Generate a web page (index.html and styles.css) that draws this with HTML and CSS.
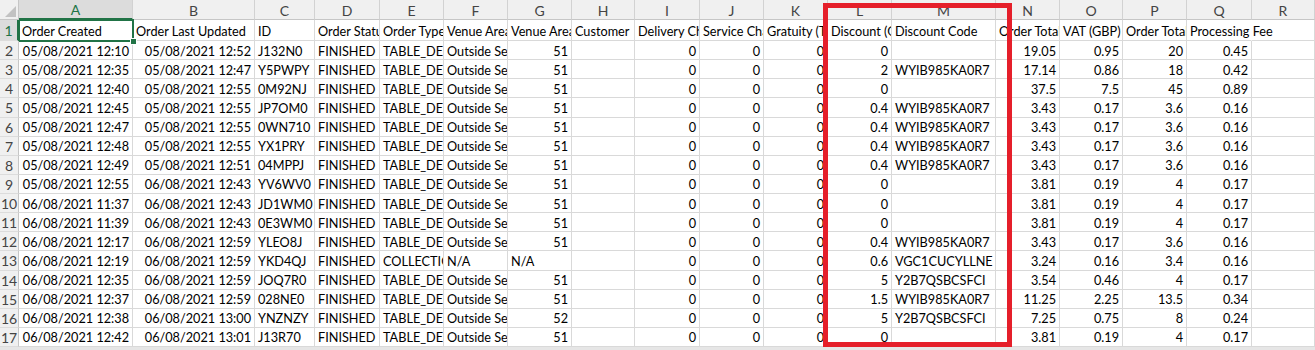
FILE: index.html
```html
<!DOCTYPE html>
<html>
<head>
<meta charset="utf-8">
<title>Orders</title>
<link rel="stylesheet" href="styles.css">
</head>
<body>
<div class="sheet">
  <div class="row hdr">
    <div class="corner"><span class="tri"></span></div>
    <div class="ch sel">A</div><div class="ch">B</div><div class="ch">C</div><div class="ch">D</div><div class="ch">E</div><div class="ch">F</div><div class="ch">G</div><div class="ch">H</div><div class="ch">I</div><div class="ch">J</div><div class="ch">K</div><div class="ch">L</div><div class="ch">M</div><div class="ch">N</div><div class="ch">O</div><div class="ch">P</div><div class="ch">Q</div><div class="ch">R</div>
  </div>
  <div class="row first">
    <div class="rh sel">1</div>
    <div class="c active">Order Created</div><div class="c">Order Last Updated</div><div class="c">ID</div><div class="c">Order Status</div><div class="c">Order Type</div><div class="c">Venue Area</div><div class="c">Venue Area ID</div><div class="c">Customer</div><div class="c">Delivery Charge (GBP)</div><div class="c">Service Charge (GBP)</div><div class="c">Gratuity (Tip)</div><div class="c">Discount (GBP)</div><div class="c">Discount Code</div><div class="c">Order Total (GBP)</div><div class="c">VAT (GBP)</div><div class="c">Order Total</div><div class="c spill">Processing Fee</div><div class="c"></div>
  </div>
  <div class="row"><div class="rh">2</div><div class="c n">05/08/2021 12:10</div><div class="c n">05/08/2021 12:52</div><div class="c">J132N0</div><div class="c">FINISHED</div><div class="c">TABLE_DELIVERY</div><div class="c">Outside Seating</div><div class="c n">51</div><div class="c"></div><div class="c n">0</div><div class="c n">0</div><div class="c n">0</div><div class="c n">0</div><div class="c"></div><div class="c n">19.05</div><div class="c n">0.95</div><div class="c n">20</div><div class="c n">0.45</div><div class="c"></div></div>
  <div class="row"><div class="rh">3</div><div class="c n">05/08/2021 12:35</div><div class="c n">05/08/2021 12:47</div><div class="c">Y5PWPY</div><div class="c">FINISHED</div><div class="c">TABLE_DELIVERY</div><div class="c">Outside Seating</div><div class="c n">51</div><div class="c"></div><div class="c n">0</div><div class="c n">0</div><div class="c n">0</div><div class="c n">2</div><div class="c">WYIB985KA0R7</div><div class="c n">17.14</div><div class="c n">0.86</div><div class="c n">18</div><div class="c n">0.42</div><div class="c"></div></div>
  <div class="row"><div class="rh">4</div><div class="c n">05/08/2021 12:40</div><div class="c n">05/08/2021 12:55</div><div class="c">0M92NJ</div><div class="c">FINISHED</div><div class="c">TABLE_DELIVERY</div><div class="c">Outside Seating</div><div class="c n">51</div><div class="c"></div><div class="c n">0</div><div class="c n">0</div><div class="c n">0</div><div class="c n">0</div><div class="c"></div><div class="c n">37.5</div><div class="c n">7.5</div><div class="c n">45</div><div class="c n">0.89</div><div class="c"></div></div>
  <div class="row"><div class="rh">5</div><div class="c n">05/08/2021 12:45</div><div class="c n">05/08/2021 12:55</div><div class="c">JP7OM0</div><div class="c">FINISHED</div><div class="c">TABLE_DELIVERY</div><div class="c">Outside Seating</div><div class="c n">51</div><div class="c"></div><div class="c n">0</div><div class="c n">0</div><div class="c n">0</div><div class="c n">0.4</div><div class="c">WYIB985KA0R7</div><div class="c n">3.43</div><div class="c n">0.17</div><div class="c n">3.6</div><div class="c n">0.16</div><div class="c"></div></div>
  <div class="row"><div class="rh">6</div><div class="c n">05/08/2021 12:47</div><div class="c n">05/08/2021 12:55</div><div class="c">0WN710</div><div class="c">FINISHED</div><div class="c">TABLE_DELIVERY</div><div class="c">Outside Seating</div><div class="c n">51</div><div class="c"></div><div class="c n">0</div><div class="c n">0</div><div class="c n">0</div><div class="c n">0.4</div><div class="c">WYIB985KA0R7</div><div class="c n">3.43</div><div class="c n">0.17</div><div class="c n">3.6</div><div class="c n">0.16</div><div class="c"></div></div>
  <div class="row"><div class="rh">7</div><div class="c n">05/08/2021 12:48</div><div class="c n">05/08/2021 12:55</div><div class="c">YX1PRY</div><div class="c">FINISHED</div><div class="c">TABLE_DELIVERY</div><div class="c">Outside Seating</div><div class="c n">51</div><div class="c"></div><div class="c n">0</div><div class="c n">0</div><div class="c n">0</div><div class="c n">0.4</div><div class="c">WYIB985KA0R7</div><div class="c n">3.43</div><div class="c n">0.17</div><div class="c n">3.6</div><div class="c n">0.16</div><div class="c"></div></div>
  <div class="row"><div class="rh">8</div><div class="c n">05/08/2021 12:49</div><div class="c n">05/08/2021 12:51</div><div class="c">04MPPJ</div><div class="c">FINISHED</div><div class="c">TABLE_DELIVERY</div><div class="c">Outside Seating</div><div class="c n">51</div><div class="c"></div><div class="c n">0</div><div class="c n">0</div><div class="c n">0</div><div class="c n">0.4</div><div class="c">WYIB985KA0R7</div><div class="c n">3.43</div><div class="c n">0.17</div><div class="c n">3.6</div><div class="c n">0.16</div><div class="c"></div></div>
  <div class="row"><div class="rh">9</div><div class="c n">05/08/2021 12:55</div><div class="c n">06/08/2021 12:43</div><div class="c">YV6WV0</div><div class="c">FINISHED</div><div class="c">TABLE_DELIVERY</div><div class="c">Outside Seating</div><div class="c n">51</div><div class="c"></div><div class="c n">0</div><div class="c n">0</div><div class="c n">0</div><div class="c n">0</div><div class="c"></div><div class="c n">3.81</div><div class="c n">0.19</div><div class="c n">4</div><div class="c n">0.17</div><div class="c"></div></div>
  <div class="row"><div class="rh">10</div><div class="c n">06/08/2021 11:37</div><div class="c n">06/08/2021 12:43</div><div class="c">JD1WM0</div><div class="c">FINISHED</div><div class="c">TABLE_DELIVERY</div><div class="c">Outside Seating</div><div class="c n">51</div><div class="c"></div><div class="c n">0</div><div class="c n">0</div><div class="c n">0</div><div class="c n">0</div><div class="c"></div><div class="c n">3.81</div><div class="c n">0.19</div><div class="c n">4</div><div class="c n">0.17</div><div class="c"></div></div>
  <div class="row"><div class="rh">11</div><div class="c n">06/08/2021 11:39</div><div class="c n">06/08/2021 12:43</div><div class="c">0E3WM0</div><div class="c">FINISHED</div><div class="c">TABLE_DELIVERY</div><div class="c">Outside Seating</div><div class="c n">51</div><div class="c"></div><div class="c n">0</div><div class="c n">0</div><div class="c n">0</div><div class="c n">0</div><div class="c"></div><div class="c n">3.81</div><div class="c n">0.19</div><div class="c n">4</div><div class="c n">0.17</div><div class="c"></div></div>
  <div class="row"><div class="rh">12</div><div class="c n">06/08/2021 12:17</div><div class="c n">06/08/2021 12:59</div><div class="c">YLEO8J</div><div class="c">FINISHED</div><div class="c">TABLE_DELIVERY</div><div class="c">Outside Seating</div><div class="c n">51</div><div class="c"></div><div class="c n">0</div><div class="c n">0</div><div class="c n">0</div><div class="c n">0.4</div><div class="c">WYIB985KA0R7</div><div class="c n">3.43</div><div class="c n">0.17</div><div class="c n">3.6</div><div class="c n">0.16</div><div class="c"></div></div>
  <div class="row"><div class="rh">13</div><div class="c n">06/08/2021 12:19</div><div class="c n">06/08/2021 12:59</div><div class="c">YKD4QJ</div><div class="c">FINISHED</div><div class="c">COLLECTION</div><div class="c">N/A</div><div class="c">N/A</div><div class="c"></div><div class="c n">0</div><div class="c n">0</div><div class="c n">0</div><div class="c n">0.6</div><div class="c">VGC1CUCYLLNE</div><div class="c n">3.24</div><div class="c n">0.16</div><div class="c n">3.4</div><div class="c n">0.16</div><div class="c"></div></div>
  <div class="row"><div class="rh">14</div><div class="c n">06/08/2021 12:35</div><div class="c n">06/08/2021 12:59</div><div class="c">JOQ7R0</div><div class="c">FINISHED</div><div class="c">TABLE_DELIVERY</div><div class="c">Outside Seating</div><div class="c n">51</div><div class="c"></div><div class="c n">0</div><div class="c n">0</div><div class="c n">0</div><div class="c n">5</div><div class="c">Y2B7QSBCSFCI</div><div class="c n">3.54</div><div class="c n">0.46</div><div class="c n">4</div><div class="c n">0.17</div><div class="c"></div></div>
  <div class="row"><div class="rh">15</div><div class="c n">06/08/2021 12:37</div><div class="c n">06/08/2021 12:59</div><div class="c">028NE0</div><div class="c">FINISHED</div><div class="c">TABLE_DELIVERY</div><div class="c">Outside Seating</div><div class="c n">51</div><div class="c"></div><div class="c n">0</div><div class="c n">0</div><div class="c n">0</div><div class="c n">1.5</div><div class="c">WYIB985KA0R7</div><div class="c n">11.25</div><div class="c n">2.25</div><div class="c n">13.5</div><div class="c n">0.34</div><div class="c"></div></div>
  <div class="row"><div class="rh">16</div><div class="c n">06/08/2021 12:38</div><div class="c n">06/08/2021 13:00</div><div class="c">YNZNZY</div><div class="c">FINISHED</div><div class="c">TABLE_DELIVERY</div><div class="c">Outside Seating</div><div class="c n">52</div><div class="c"></div><div class="c n">0</div><div class="c n">0</div><div class="c n">0</div><div class="c n">5</div><div class="c">Y2B7QSBCSFCI</div><div class="c n">7.25</div><div class="c n">0.75</div><div class="c n">8</div><div class="c n">0.24</div><div class="c"></div></div>
  <div class="row"><div class="rh">17</div><div class="c n">06/08/2021 12:42</div><div class="c n">06/08/2021 13:01</div><div class="c">J13R70</div><div class="c">FINISHED</div><div class="c">TABLE_DELIVERY</div><div class="c">Outside Seating</div><div class="c n">51</div><div class="c"></div><div class="c n">0</div><div class="c n">0</div><div class="c n">0</div><div class="c n">0</div><div class="c"></div><div class="c n">3.81</div><div class="c n">0.19</div><div class="c n">4</div><div class="c n">0.17</div><div class="c"></div></div>
  <div class="handle"></div>
  <div class="highlight"></div>
</div>
</body>
</html>
```
FILE: styles.css
```css
html, body {
  margin: 0;
  padding: 0;
  background: #e6e6e6;
  overflow: hidden;
}
body {
  width: 1315px;
  height: 350px;
  font-family: Lato, "Liberation Sans", sans-serif;
  font-size: 12.7px;
  color: #000;
}
.sheet {
  position: relative;
  background: #fff;
  display: flex;
  flex-direction: column;
}
.row {
  display: grid;
  grid-template-columns: 19px 114px 122px 60px 65px 64px 64px 64px 63px 65px 64px 64px 64px 104px 64px 63px 64px 65px 1fr;
  height: 19.125px;
}
.row.hdr { height: 20px; }
.row.first { height: 21px; }
.row > div {
  box-sizing: border-box;
  border-right: 1px solid #d9d9d9;
  border-bottom: 1px solid #d9d9d9;
  white-space: nowrap;
  overflow: hidden;
  display: flex;
  align-items: center;
  padding: 1px 3px 0 3px;
  min-width: 0;
}
.c.n { justify-content: flex-end; padding-right: 3px; }
.corner {
  background: #f0f0f0;
  position: relative;
  border-right-color: #c6c6c6 !important;
  border-bottom-color: #c6c6c6 !important;
}
.tri {
  position: absolute;
  right: 2px;
  bottom: 2px;
  width: 0;
  height: 0;
  border-left: 11px solid transparent;
  border-bottom: 11px solid #c2c2c2;
}
.ch {
  background: #f0f0f0;
  justify-content: center;
  color: #444;
  font-size: 14px;
  border-right-color: #d2d2d2 !important;
  border-bottom-color: #c6c6c6 !important;
}
.ch.sel {
  background: #dcdcdc;
  color: #217346;
  border-bottom: 2px solid #217346 !important;
}
.rh {
  background: #f0f0f0;
  justify-content: center;
  color: #444;
  font-size: 14px;
  padding: 1px 0 0 0 !important;
  border-right-color: #c6c6c6 !important;
  border-bottom-color: #dcdcdc !important;
}
.rh.sel {
  background: #dcdcdc;
  color: #217346;
  border-right: 2px solid #217346 !important;
}
.c.active {
  outline: 2px solid #217346;
  outline-offset: -1px;
}
.c.spill {
  overflow: visible;
  border-right-color: transparent;
  position: relative;
  z-index: 1;
}
.handle {
  position: absolute;
  left: 130px;
  top: 38px;
  width: 5px;
  height: 5px;
  background: #217346;
  border: 1px solid #fff;
}
.highlight {
  position: absolute;
  left: 823px;
  top: 3px;
  width: 189px;
  height: 344px;
  box-sizing: border-box;
  border: 5px solid #e51f2a;
  z-index: 2;
}
```
